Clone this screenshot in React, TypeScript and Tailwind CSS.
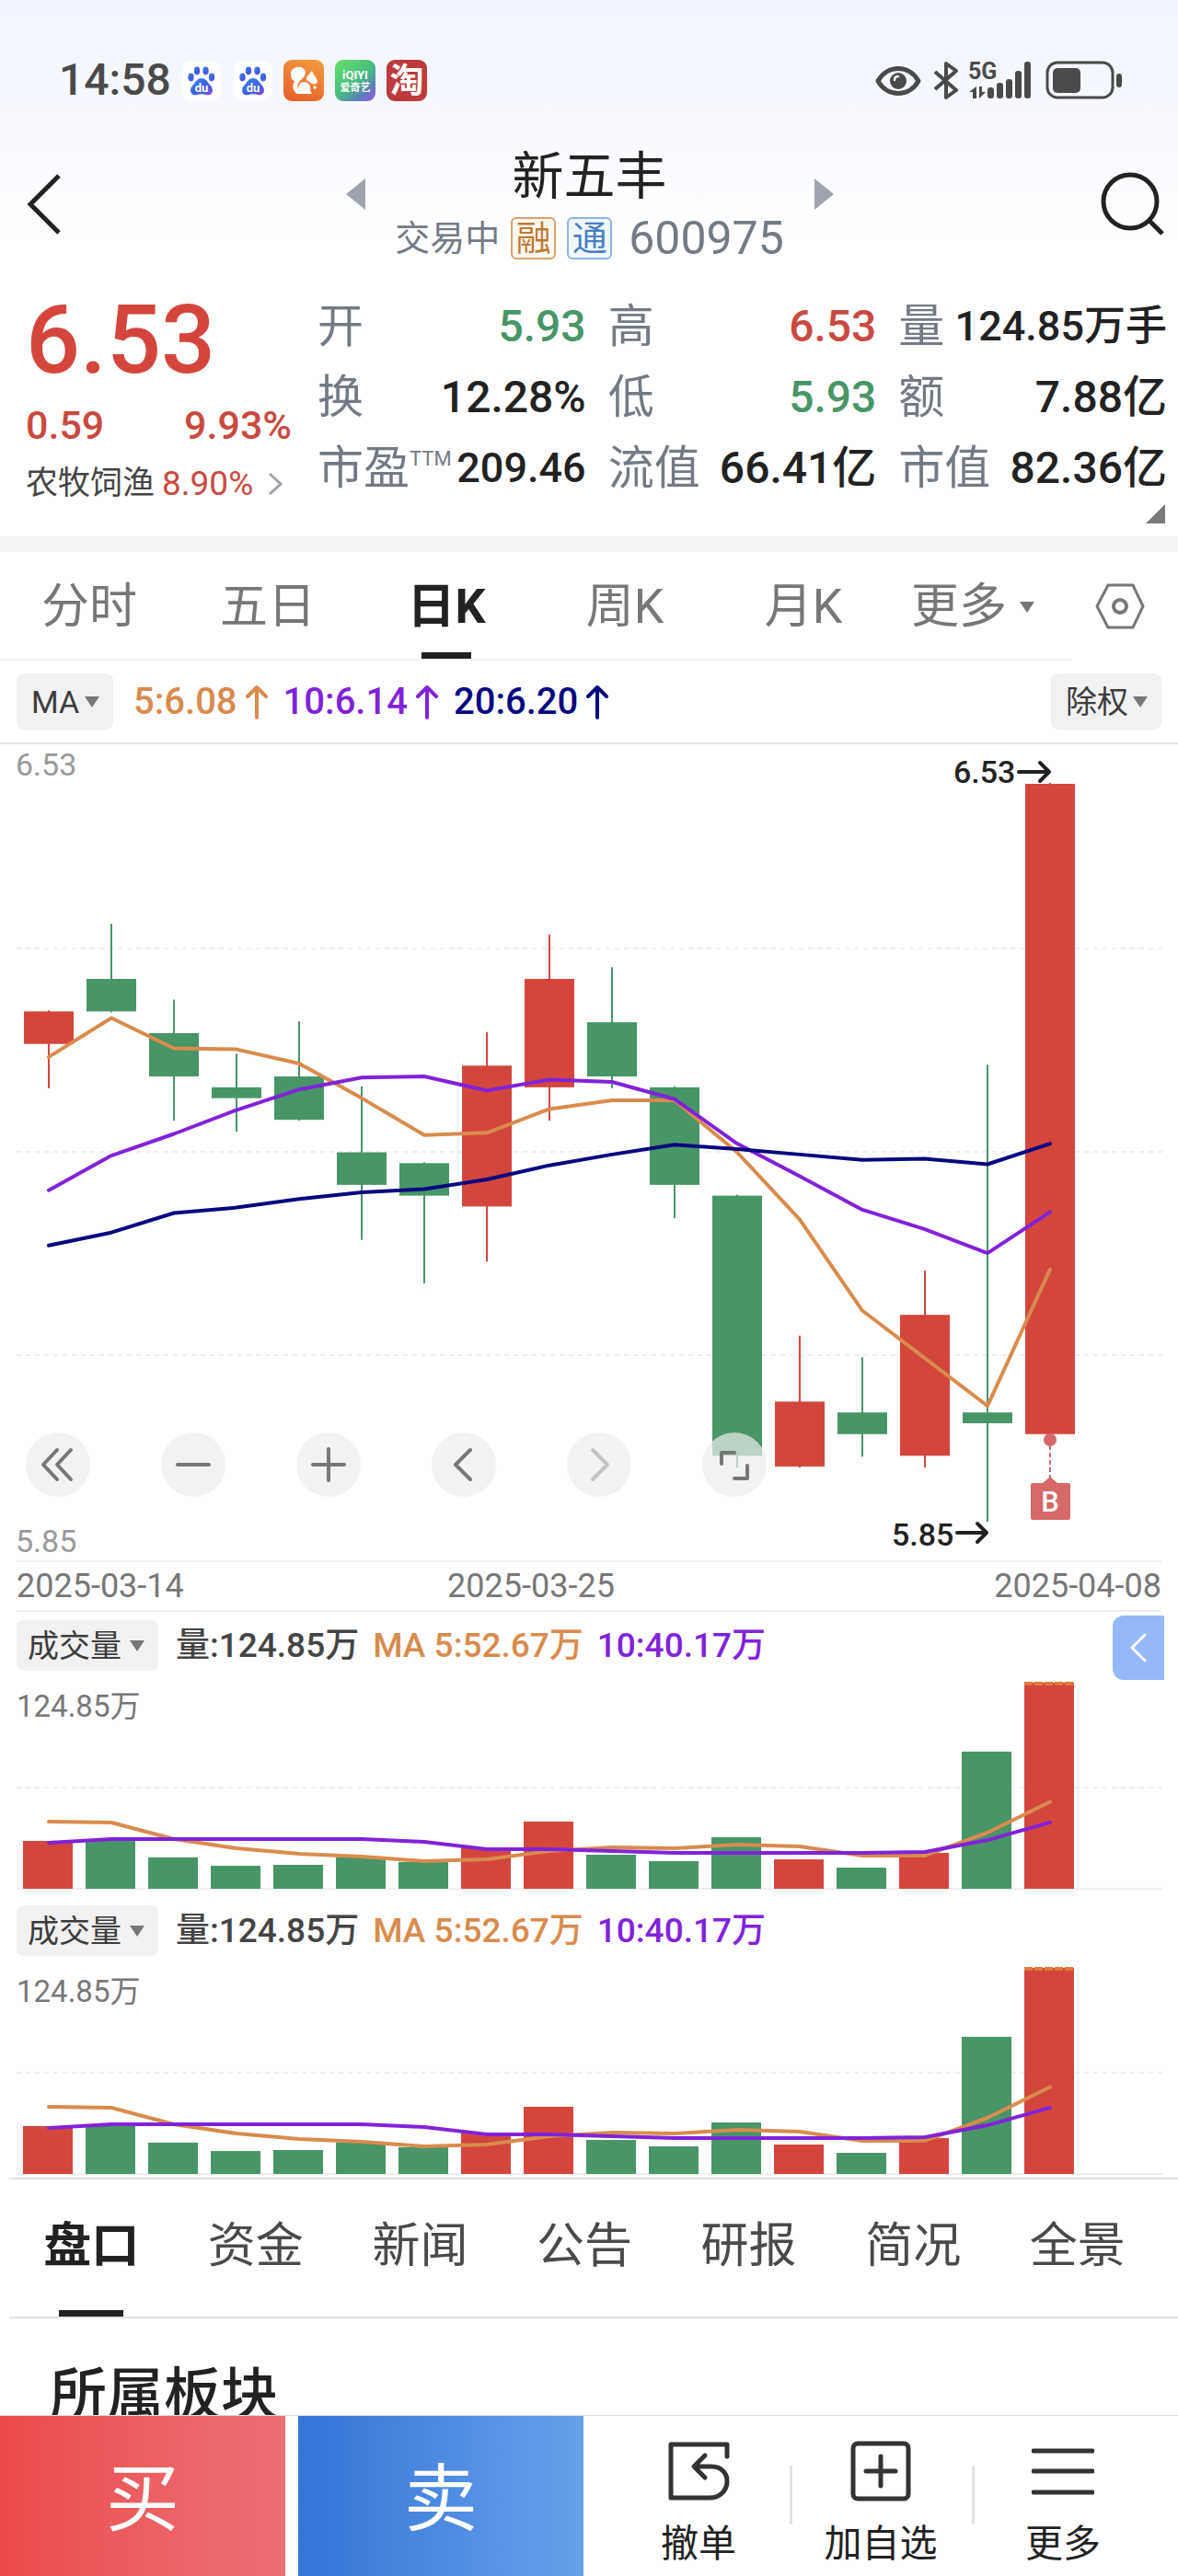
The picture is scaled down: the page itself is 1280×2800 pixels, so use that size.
import { ReactNode, useState } from "react";
import clsx from "clsx";

const RED = "#d4463c";
const GREEN = "#489567";
const ORANGE = "#d98b4d";
const PURPLE = "#8122d9";
const NAVY = "#070780";

const STEP = 68;
const FIRST_X = 53;
const BAR_WIDTH = 54;

// open, close, high, low
const candles = [
  [6.29, 6.32, 6.32, 6.25],
  [6.35, 6.32, 6.4, 6.32],
  [6.3, 6.26, 6.33, 6.22],
  [6.25, 6.24, 6.28, 6.21],
  [6.26, 6.22, 6.31, 6.22],
  [6.19, 6.16, 6.25, 6.11],
  [6.18, 6.15, 6.18, 6.07],
  [6.14, 6.27, 6.3, 6.09],
  [6.25, 6.35, 6.39, 6.22],
  [6.31, 6.26, 6.36, 6.25],
  [6.25, 6.16, 6.25, 6.13],
  [6.15, 5.91, 6.15, 5.9],
  [5.9, 5.96, 6.02, 5.9],
  [5.95, 5.93, 6.0, 5.91],
  [5.91, 6.04, 6.08, 5.9],
  [5.95, 5.94, 6.27, 5.85],
  [5.93, 6.53, 6.53, 5.93],
];

const ma5 = [
  6.278, 6.314, 6.286, 6.285, 6.272, 6.24, 6.206, 6.208, 6.23, 6.238, 6.238,
  6.19, 6.128, 6.044, 6.0, 5.956, 6.082,
];
const ma10 = [
  6.155, 6.187, 6.207, 6.229, 6.248, 6.259, 6.26, 6.247, 6.257, 6.255, 6.239,
  6.198, 6.168, 6.137, 6.119, 6.097, 6.135,
];
const ma20 = [
  6.104, 6.116, 6.134, 6.139, 6.147, 6.153, 6.156, 6.165, 6.178, 6.188, 6.197,
  6.193, 6.188, 6.183, 6.184, 6.179, 6.198,
];

const volumes = [
  29, 29, 19, 13.9, 14.5, 19, 16.2, 25.1, 40.7, 20.6, 16.7, 31.2, 17.8, 12.8,
  21.7, 83.1, 124.85,
];
const volMa5 = [
  40.7, 40.1, 30.1, 24.5, 21.2, 19.5, 16.7, 17.8, 22.9, 25.1, 24.5, 26.8, 25.6,
  20.1, 20.1, 34, 52.67,
];
const volMa10 = [
  27.9, 30.1, 30.1, 30.1, 30.1, 30.1, 28.4, 24, 24, 22.9, 21.7, 21.7, 21.7,
  21.7, 22.3, 29.5, 40.17,
];

const xAt = (i: number) => FIRST_X + i * STEP;
const priceY = (p: number) => 43 + (6.53 - p) * 1178;
const volumeY = (v: number) => 228 - (v / 124.85) * 224;

const toPoints = (values: number[], y: (v: number) => number) =>
  values.map((v, i) => `${xAt(i)},${y(v)}`).join(" ");

function Line({
  values,
  y,
  color,
}: {
  values: number[];
  y: (v: number) => number;
  color: string;
}) {
  return (
    <polyline
      points={toPoints(values, y)}
      fill="none"
      stroke={color}
      strokeWidth="4"
      strokeLinejoin="round"
      strokeLinecap="round"
    />
  );
}

function GridLine({ y }: { y: number }) {
  return (
    <line x1="18" x2="1263" y1={y} y2={y} stroke="#eeeeee" strokeWidth="2" strokeDasharray="5 5" />
  );
}

function Caret({ className }: { className?: string }) {
  return (
    <svg viewBox="0 0 16 12" className={clsx("h-3 w-4 shrink-0", className)} fill="#777777">
      <path d="M0 0h16L8 12z" />
    </svg>
  );
}

function Dropdown({
  label,
  value,
  className,
}: {
  label: string;
  value: string;
  className: string;
}) {
  return (
    <span className="relative flex items-center">
      <select
        aria-label={label}
        className={clsx(
          "appearance-none rounded-lg bg-[#f1f1f1] pl-4 text-[34px] leading-none font-normal text-[#3c3c3c]",
          className
        )}
      >
        <option>{value}</option>
      </select>
      <Caret className="pointer-events-none absolute right-[15px]" />
    </span>
  );
}

function BaiduIcon() {
  return (
    <svg viewBox="0 0 42 43" className="h-[43px] w-[42px]">
      <defs>
        <linearGradient id="paw" x1="0" y1="0" x2="1" y2="1">
          <stop offset="0" stopColor="#3f86f0" />
          <stop offset="0.6" stopColor="#3a5fe0" />
          <stop offset="1" stopColor="#8a4be8" />
        </linearGradient>
      </defs>
      <rect width="42" height="43" rx="9" fill="#ffffff" />
      <g fill="url(#paw)">
        <ellipse cx="9.5" cy="18" rx="3.2" ry="4.4" />
        <ellipse cx="16" cy="11" rx="3.2" ry="4.4" />
        <ellipse cx="25.5" cy="11" rx="3.2" ry="4.4" />
        <ellipse cx="32" cy="18" rx="3.2" ry="4.4" />
        <path d="M21 19c4 0 6 3 8 6 2 2 4 4 4 7 0 4-3 6-7 5-3-1-7-1-10 0-4 1-7-1-7-5 0-3 2-5 4-7 2-3 4-6 8-6z" />
      </g>
      <text x="21" y="34" textAnchor="middle" fontSize="13" fontWeight="700" fill="#ffffff">
        du
      </text>
    </svg>
  );
}

function SquirrelIcon() {
  return (
    <svg viewBox="0 0 44 45" className="h-[45px] w-11">
      <defs>
        <linearGradient id="uc" x1="0.8" y1="0" x2="0.4" y2="1">
          <stop offset="0" stopColor="#f29a3e" />
          <stop offset="1" stopColor="#e8642c" />
        </linearGradient>
      </defs>
      <rect width="44" height="45" rx="9" fill="url(#uc)" />
      <g fill="#ffffff">
        <path d="M8 15c0-5 5-8 11-7 6 2 6 8 2 12-5 4-7 8-5 12 1 3 3 4 4 5h-5c-5-3-6-8-3-14-3-1-4-4-4-8z" />
        <path d="M25 19l6-7c1 4 5 7 6 11 0 3-3 4-6 3l-6-4z" />
        <path d="M17 37c-3-7 0-13 6-13 6 1 7 6 6 9l2 4z" />
        <circle cx="34" cy="30" r="1.8" />
      </g>
    </svg>
  );
}

function IqiyiIcon() {
  return (
    <svg viewBox="0 0 44 45" className="h-[45px] w-11">
      <defs>
        <linearGradient id="iqiyi" x1="0.2" y1="0" x2="1" y2="1">
          <stop offset="0" stopColor="#5fdc68" />
          <stop offset="0.5" stopColor="#49b886" />
          <stop offset="0.75" stopColor="#5a80b8" />
          <stop offset="1" stopColor="#a050f0" />
        </linearGradient>
      </defs>
      <rect width="44" height="45" rx="9" fill="url(#iqiyi)" />
      <g fill="#ffffff" textAnchor="middle" fontWeight="700">
        <text x="22" y="21" fontSize="13">
          iQIYI
        </text>
        <text x="22" y="34" fontSize="11">
          爱奇艺
        </text>
      </g>
    </svg>
  );
}

function TaoIcon() {
  return (
    <svg viewBox="0 0 44 45" className="h-[45px] w-11">
      <rect width="44" height="45" rx="9" fill="#bf3a3c" />
      <text x="22" y="36" textAnchor="middle" fontSize="37" fontWeight="700" fill="#ffffff">
        淘
      </text>
    </svg>
  );
}

function StatusBar() {
  return (
    <div className="flex h-[50px] items-center justify-between pr-[61px] pl-16 text-[#4a4a4a]">
      <div className="flex items-center gap-3">
        <span className="text-[48px] leading-none font-medium">14:58</span>
        <span className="flex gap-[14px]">
          <BaiduIcon />
          <BaiduIcon />
        </span>
        <SquirrelIcon />
        <IqiyiIcon />
        <TaoIcon />
      </div>
      <svg viewBox="0 -4 268 50" className="h-[50px] w-[268px]" fill="none" stroke="#4a4a4a">
        <path d="M3 22C13 4 37 4 47 22 37 40 13 40 3 22z" strokeWidth="5" strokeLinejoin="round" />
        <circle cx="25" cy="22" r="9" fill="#4a4a4a" stroke="none" />
        <path d="M21 21c0-2 1-4 4-4" stroke="#f4f6fc" strokeWidth="2.5" strokeLinecap="round" />
        <path d="M65 12l23 20-11 8V3l11 8-23 20" strokeWidth="4" strokeLinejoin="round" />
        <g fill="#4a4a4a" stroke="none">
          <text x="101" y="20" fontSize="25" fontWeight="700">
            5G
          </text>
          <path d="M110 28v13h-4v-7h-4zM113 28v13l7-7h-4v-6z" />
          <rect x="122" y="29" width="7" height="12" rx="3" />
          <rect x="132" y="24" width="7" height="17" rx="3" />
          <rect x="142" y="20" width="7" height="21" rx="3" />
          <rect x="152" y="11" width="7" height="30" rx="3" />
          <rect x="162" y="1" width="7" height="40" rx="3" />
          <rect x="193" y="8" width="30" height="27" rx="5" />
          <rect x="262" y="14" width="6" height="15" rx="3" />
        </g>
        <rect x="187" y="2" width="71" height="38" rx="11" strokeWidth="3" />
      </svg>
    </div>
  );
}

function TitleBar() {
  return (
    <header className="flex items-center justify-between pr-3 pl-[29px]">
      <button aria-label="返回" className="w-14">
        <svg viewBox="0 0 38 66" className="h-[66px] w-[38px]" fill="none" stroke="#222222" strokeWidth="5">
          <path d="M35 2L4 33l31 31" />
        </svg>
      </button>
      <div className="flex w-[530px] items-start justify-between">
        <button aria-label="上一只" className="mt-[34px]">
          <svg viewBox="0 0 21 34" className="h-[34px] w-[21px]" fill="#9ea4ad">
            <path d="M21 0v34L0 17z" />
          </svg>
        </button>
        <div className="flex flex-col items-center gap-[10px]">
          <h1 className="text-[56px] leading-16 text-[#222222]">新五丰</h1>
          <div className="flex items-center text-[38px] leading-[50px] text-[#727b85]">
            <span>交易中</span>
            <span className="ml-3 flex h-[46px] w-[49px] items-center justify-center rounded-md border-2 border-[#d9a26a] bg-[#fff9f2] text-[#bf7a33]">
              融
            </span>
            <span className="mr-[18px] ml-3 flex h-[46px] w-[49px] items-center justify-center rounded-md border-2 border-[#8fb4de] bg-[#f2f8ff] text-[#4a7fc4]">
              通
            </span>
            <span className="text-[50px]">600975</span>
          </div>
        </div>
        <button aria-label="下一只" className="mt-[34px]">
          <svg viewBox="0 0 21 34" className="h-[34px] w-[21px]" fill="#9ea4ad">
            <path d="M0 0v34l21-17z" />
          </svg>
        </button>
      </div>
      <button aria-label="搜索">
        <svg viewBox="0 0 72 70" className="h-[70px] w-[72px]" fill="none" stroke="#222222" strokeWidth="5">
          <circle cx="32" cy="32" r="29" />
          <path d="M53 53l14 14" />
        </svg>
      </button>
    </header>
  );
}

const quoteItems: { label: ReactNode; value: string; tone: string }[] = [
  { label: "开", value: "5.93", tone: "text-[48px] text-[#489567]" },
  { label: "高", value: "6.53", tone: "text-[48px] text-[#c94a42]" },
  { label: "量", value: "124.85万手", tone: "text-[45px] text-[#222222]" },
  { label: "换", value: "12.28%", tone: "text-[48px] text-[#222222]" },
  { label: "低", value: "5.93", tone: "text-[48px] text-[#489567]" },
  { label: "额", value: "7.88亿", tone: "text-[48px] text-[#222222]" },
  {
    label: (
      <>
        市盈<span className="-mt-5 text-[22px] leading-none">TTM</span>
      </>
    ),
    value: "209.46",
    tone: "text-[45px] text-[#222222]",
  },
  { label: "流值", value: "66.41亿", tone: "text-[48px] text-[#222222]" },
  { label: "市值", value: "82.36亿", tone: "text-[48px] text-[#222222]" },
];

function Quote() {
  return (
    <section className="relative flex h-[299px] pt-8 pr-3">
      <div className="w-[317px] pl-7 text-[#c94a42]">
        <div className="text-[104px] leading-[108px] font-medium text-[#d4463c]">6.53</div>
        <div className="mt-3 flex justify-between text-[43px] leading-[52px] font-medium">
          <span>0.59</span>
          <span>9.93%</span>
        </div>
        <a href="#sector" className="mt-3 flex items-center text-[35px] leading-[52px]">
          <span className="mr-2 text-[#444444]">农牧饲渔</span>
          <span className="text-[37px]">8.90%</span>
          <svg viewBox="0 0 16 24" className="ml-4 h-6 w-4" fill="none" stroke="#a0a4aa" strokeWidth="3">
            <path d="M2 1l12 11L2 23" />
          </svg>
        </a>
      </div>
      <dl className="ml-7 grid flex-1 grid-cols-3 content-start gap-x-6">
        {quoteItems.map((item, i) => (
          <div key={i} className="flex h-[77px] items-center justify-between whitespace-nowrap">
            <dt className="flex items-center text-[50px] leading-none text-[#727b85]">{item.label}</dt>
            <dd className={clsx("leading-none font-medium", item.tone)}>{item.value}</dd>
          </div>
        ))}
      </dl>
      <svg viewBox="0 0 21 21" className="absolute right-[14px] bottom-[14px] h-[21px] w-[21px]" fill="#7a7a7a">
        <path d="M21 0v21H0z" />
      </svg>
    </section>
  );
}

const periods = ["分时", "五日", "日K", "周K", "月K"];

function PeriodTabs() {
  const [active, setActive] = useState("日K");

  return (
    <nav className="flex h-[118px] text-[52px] leading-none text-[#777777]">
      <div className="grid flex-1 grid-cols-6 border-b-2 border-[#f1f1f1]">
        {periods.map((name) => (
          <button
            key={name}
            onClick={() => setActive(name)}
            className={clsx("relative pt-1", active === name && "font-bold text-[#222222]")}
          >
            {name}
            {active === name && (
              <span className="absolute bottom-0 left-1/2 h-[7px] w-[54px] -translate-x-1/2 bg-[#222222]" />
            )}
          </button>
        ))}
        <button aria-haspopup="menu" className="flex items-center gap-[14px] pt-1 pl-5">
          更多
          <Caret />
        </button>
      </div>
      <button aria-label="图表设置" className="flex w-[116px] items-center justify-center pr-[10px]">
        <svg viewBox="0 0 54 50" className="h-[50px] w-[54px]" fill="none" stroke="#777777" strokeWidth="3">
          <path d="M14 2h27l11 23-11 23H14L2 25z" />
          <circle cx="27" cy="25" r="7" strokeWidth="4" />
        </svg>
      </button>
    </nav>
  );
}

function UpArrow() {
  return (
    <svg
      viewBox="0 0 26 38"
      className="mr-4 ml-2 h-[38px] w-[26px]"
      fill="none"
      stroke="currentColor"
      strokeWidth="4"
      strokeLinecap="round"
      strokeLinejoin="round"
    >
      <path d="M13 36V3M3 13L13 3l10 10" />
    </svg>
  );
}

function MaBar() {
  return (
    <div className="flex h-[91px] items-center justify-between border-b-2 border-[#e5e5e5] pr-[18px] pl-[18px]">
      <div className="flex items-center text-[40px] leading-none font-medium">
        <Dropdown label="主图指标" value="MA" className="h-[61px] w-[105px]" />
        <span className="ml-[22px] text-[#d98b4d]">5:6.08</span>
        <span className="text-[#d98b4d]">
          <UpArrow />
        </span>
        <span className="text-[#8122d9]">10:6.14</span>
        <span className="text-[#8122d9]">
          <UpArrow />
        </span>
        <span className="text-[#070780]">20:6.20</span>
        <span className="text-[#070780]">
          <UpArrow />
        </span>
      </div>
      <Dropdown label="复权方式" value="除权" className="h-[61px] w-[120px]" />
    </div>
  );
}

const chartTools = [
  { name: "最左", path: "M34 19L19 35l15 16M49 19L34 35l15 16", faded: false },
  { name: "缩小", path: "M18 35h34", faded: false },
  { name: "放大", path: "M18 35h34M35 18v34", faded: false },
  { name: "左移", path: "M42 19L26 35l16 16", faded: false },
  { name: "右移", path: "M28 19l16 16-16 16", faded: true },
  { name: "全屏", path: "M21 34V22h14M49 36v14H35", faded: false },
];

function PriceChart() {
  const last = xAt(16);

  return (
    <div className="relative">
      <svg viewBox="0 0 1280 887" className="block w-full" role="img" aria-label="日K线图">
        <GridLine y={222} />
        <GridLine y={443} />
        <GridLine y={664} />
        {candles.map(([open, close, high, low], i) => {
          const color = close > open ? RED : GREEN;
          const top = priceY(Math.max(open, close));
          return (
            <g key={i} fill={color}>
              <rect x={xAt(i) - 1} y={priceY(high) - 1} width="2" height={priceY(low) - priceY(high) + 2} />
              <rect
                x={xAt(i) - BAR_WIDTH / 2}
                y={top}
                width={BAR_WIDTH}
                height={priceY(Math.min(open, close)) - top}
              />
            </g>
          );
        })}
        <Line values={ma5} y={priceY} color={ORANGE} />
        <Line values={ma10} y={priceY} color={PURPLE} />
        <Line values={ma20} y={priceY} color={NAVY} />

        <g fontSize="34" fill="#999999">
          <text x="17" y="34">
            6.53
          </text>
          <text x="17" y="878">
            5.85
          </text>
        </g>
        <g fontSize="34" fontWeight="500" fill="#222222">
          <text x="1036" y="42">
            6.53
          </text>
          <text x="969" y="871">
            5.85
          </text>
        </g>
        <g fill="none" stroke="#222222" strokeWidth="4" strokeLinecap="round" strokeLinejoin="round">
          <path d="M1107 30h33M1130 20l10 10-10 10" />
          <path d="M1040 857h32M1062 847l10 10-10 10" />
        </g>

        <g fill="#d56868">
          <circle cx={last} cy="756" r="7" />
          <path d={`M${last} 762v36`} stroke="#d56868" strokeWidth="2" strokeDasharray="5 3" />
          <path d={`M${last - 9} 804l9-8 9 8z`} />
          <rect x={last - 21} y="803" width="43" height="40" rx="2" />
          <text x={last} y="834" textAnchor="middle" fontSize="31" fontWeight="500" fill="#ffffff">
            B
          </text>
        </g>
      </svg>
      <div className="absolute bottom-[69px] left-7 flex gap-[77px]">
        {chartTools.map((tool) => (
          <button key={tool.name} aria-label={tool.name} className="size-[70px] rounded-full bg-[#ececec]/70">
            <svg
              viewBox="0 0 70 70"
              fill="none"
              stroke={tool.faded ? "#c4c4c4" : "#777777"}
              strokeWidth="4"
              strokeLinecap="round"
              strokeLinejoin="round"
            >
              <path d={tool.path} />
            </svg>
          </button>
        ))}
      </div>
    </div>
  );
}

function VolumePanel({ label }: { label: string }) {
  return (
    <section>
      <div className="flex h-[73px] items-center gap-[15px] pl-[18px] text-[37px] leading-none font-medium">
        <Dropdown label={label} value="成交量" className="h-[55px] w-[154px] !pl-3" />
        <span className="ml-1 text-[#444444]">量:124.85万</span>
        <span className="text-[#d98b4d]">MA 5:52.67万</span>
        <span className="text-[#8122d9]">10:40.17万</span>
      </div>
      <svg viewBox="0 0 1280 232" className="block w-full" role="img" aria-label="成交量图">
        <GridLine y={118} />
        <line x1="18" x2="1263" y1="228" y2="228" stroke="#eeeeee" strokeWidth="2" />
        {volumes.map((v, i) => (
          <rect
            key={i}
            x={xAt(i) - BAR_WIDTH / 2 - 1}
            y={volumeY(v)}
            width={BAR_WIDTH}
            height={228 - volumeY(v)}
            fill={candles[i][1] > candles[i][0] ? RED : GREEN}
          />
        ))}
        <path
          d={`M${xAt(16) - 28} 5h55`}
          stroke="#e0793a"
          strokeWidth="4"
          strokeDasharray="9 2"
        />
        <Line values={volMa5} y={volumeY} color={ORANGE} />
        <Line values={volMa10} y={volumeY} color={PURPLE} />
        <text x="18" y="41" fontSize="33" fill="#777777">
          124.85万
        </text>
      </svg>
    </section>
  );
}

const infoTabs = ["盘口", "资金", "新闻", "公告", "研报", "简况", "全景"];

function InfoTabs() {
  const [active, setActive] = useState("盘口");

  return (
    <nav className="ml-[10px] grid h-[153px] grid-cols-7 border-y-2 border-[#e3e3e3] pr-5 text-[52px] leading-none text-[#4a4a4a]">
      {infoTabs.map((name) => (
        <button
          key={name}
          onClick={() => setActive(name)}
          className={clsx("relative pb-1", active === name && "font-bold text-[#222222]")}
        >
          {name}
          {active === name && (
            <span className="absolute bottom-0 left-1/2 h-[7px] w-[70px] -translate-x-1/2 bg-[#222222]" />
          )}
        </button>
      ))}
    </nav>
  );
}

const actions = [
  {
    name: "撤单",
    icon: <path d="M65 18V5H4v58h42c24 0 26-34 2-34H31M41 17L29 29l12 12" />,
  },
  {
    name: "加自选",
    icon: (
      <>
        <rect x="4" y="4" width="60" height="60" rx="5" />
        <path d="M34 18v32M18 34h32" />
      </>
    ),
  },
  { name: "更多", icon: <path d="M2 12h64M2 34h64M2 57h64" /> },
];

function TradeBar() {
  return (
    <footer className="fixed inset-x-0 bottom-0 flex h-[175px] border-t border-[#dddddd] bg-white">
      <button className="w-[310px] bg-linear-to-r from-[#ec4a4a] to-[#ec7074] pt-2 text-[80px] leading-none text-white">
        买
      </button>
      <button className="ml-[14px] w-[310px] bg-linear-to-r from-[#3474d8] to-[#66a1e9] pt-2 text-[80px] leading-none text-white">
        卖
      </button>
      <div className="flex flex-1 items-center px-[26px] pt-4">
        {actions.map((action, i) => (
          <div key={action.name} className="relative flex-1">
            {i > 0 && <span className="absolute top-7 left-0 h-16 w-[3px] bg-[#e3e3e3]" />}
            <button className="flex w-full flex-col items-center gap-5 text-[41px] leading-[50px] text-[#222222]">
              <svg
                viewBox="0 0 68 68"
                className="size-[68px]"
                fill="none"
                stroke="#333333"
                strokeWidth="5"
                strokeLinecap="round"
                strokeLinejoin="round"
              >
                {action.icon}
              </svg>
              {action.name}
            </button>
          </div>
        ))}
      </div>
    </footer>
  );
}

export default function App() {
  return (
    <div
      lang="zh-CN"
      className="min-h-screen bg-white bg-linear-to-b from-[#f1f4ff] to-white to-[260px] font-[Roboto,'Noto_Sans_CJK_SC',sans-serif]"
    >
      <div className="pt-[62px] pb-12">
        <StatusBar />
      </div>
      <TitleBar />
      <Quote />
      <div className="h-[17px] bg-[#f4f4f4]" />
      <PeriodTabs />
      <MaBar />
      <PriceChart />
      <div className="mx-[18px] flex h-14 items-center justify-between border-y-2 border-[#eeeeee] text-[36px] leading-none text-[#777777]">
        <span>2025-03-14</span>
        <span className="pr-[126px]">2025-03-25</span>
        <span>2025-04-08</span>
      </div>
      <div className="relative flex flex-col gap-[5px]">
        <VolumePanel label="副图一" />
        <VolumePanel label="副图二" />
        <button
          aria-label="展开"
          className="absolute top-1 right-[15px] flex h-[70px] w-14 items-center justify-center rounded-l-xl bg-[#93b9f9]"
        >
          <svg
            viewBox="0 0 18 32"
            className="h-8 w-[18px]"
            fill="none"
            stroke="#ffffff"
            strokeWidth="3"
            strokeLinecap="round"
          >
            <path d="M16 2L2 16l14 14" />
          </svg>
        </button>
      </div>
      <InfoTabs />
      <h2 id="sector" className="mt-12 pl-[54px] text-[62px] leading-[72px] font-medium text-[#222222]">
        所属板块
      </h2>
      <TradeBar />
    </div>
  );
}
